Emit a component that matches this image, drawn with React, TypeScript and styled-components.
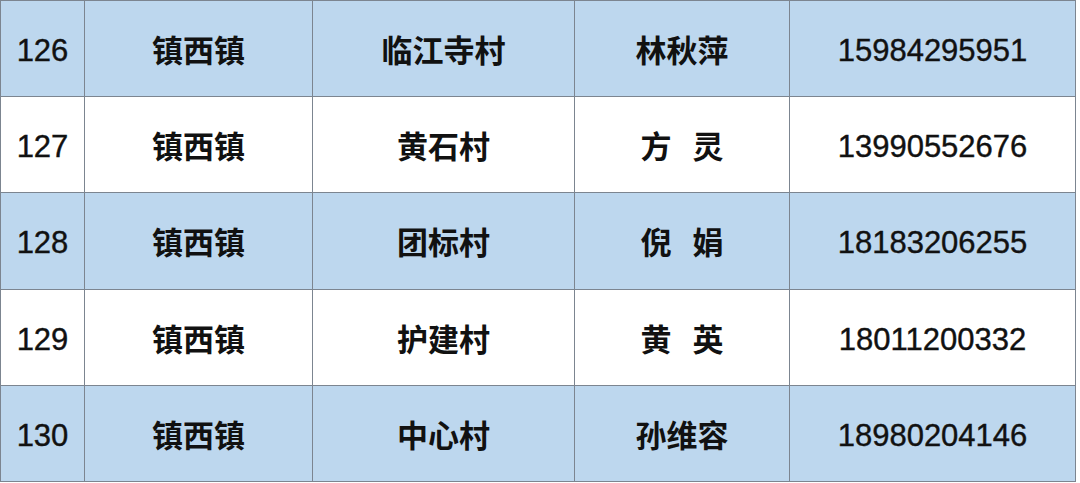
import styled, { createGlobalStyle } from "styled-components";

const GlobalStyle = createGlobalStyle`
  html, body {
    margin: 0;
    padding: 0;
    background: #ffffff;
  }
`;

const Table = styled.div`
  display: grid;
  grid-template-columns: 84px 228px 262px 215px 286px;
  grid-auto-rows: 96.2px;
  width: max-content;
  border-top: 1px solid #7c8590;
  border-left: 1px solid #7c8590;
`;

const Cell = styled.div<{ $striped: boolean; $cjk?: boolean }>`
  box-sizing: border-box;
  display: flex;
  align-items: center;
  justify-content: center;
  padding-top: ${({ $cjk }) => ($cjk ? "0" : "5px")};
  border-right: 1px solid #7c8590;
  border-bottom: 1px solid #7c8590;
  background: ${({ $striped }) => ($striped ? "#bdd7ee" : "#ffffff")};
  color: #111111;
  font-family: ${({ $cjk }) =>
    $cjk
      ? `"Noto Sans CJK SC", "Noto Sans", sans-serif`
      : `"Liberation Sans", Arial, sans-serif`};
  font-size: 31px;
  font-weight: ${({ $cjk }) => ($cjk ? 700 : 400)};
  -webkit-text-stroke: ${({ $cjk }) => ($cjk ? "0" : "0.4px #111111")};
  white-space: nowrap;
`;

const Spread = styled.span`
  letter-spacing: 21px;
  margin-right: -21px;
`;

type Row = {
  no: number;
  town: string;
  village: string;
  name: string;
  phone: string;
};

const rows: Row[] = [
  { no: 126, town: "镇西镇", village: "临江寺村", name: "林秋萍", phone: "15984295951" },
  { no: 127, town: "镇西镇", village: "黄石村", name: "方灵", phone: "13990552676" },
  { no: 128, town: "镇西镇", village: "团标村", name: "倪娟", phone: "18183206255" },
  { no: 129, town: "镇西镇", village: "护建村", name: "黄英", phone: "18011200332" },
  { no: 130, town: "镇西镇", village: "中心村", name: "孙维容", phone: "18980204146" },
];

export default function App() {
  return (
    <>
      <GlobalStyle />
      <Table>
        {rows.map((r, i) => {
          const striped = i % 2 === 0;
          return [
            <Cell key={`${r.no}-no`} $striped={striped}>
              {r.no}
            </Cell>,
            <Cell key={`${r.no}-town`} $striped={striped} $cjk>
              {r.town}
            </Cell>,
            <Cell key={`${r.no}-village`} $striped={striped} $cjk>
              {r.village}
            </Cell>,
            <Cell key={`${r.no}-name`} $striped={striped} $cjk>
              {r.name.length === 2 ? <Spread>{r.name}</Spread> : r.name}
            </Cell>,
            <Cell key={`${r.no}-phone`} $striped={striped}>
              {r.phone}
            </Cell>,
          ];
        })}
      </Table>
    </>
  );
}
